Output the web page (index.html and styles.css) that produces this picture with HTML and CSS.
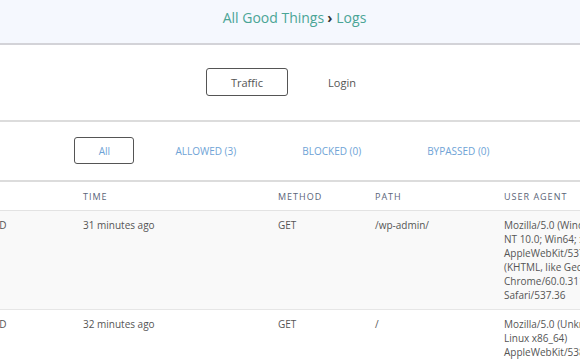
FILE: index.html
```html
<!DOCTYPE html>
<html>
<head>
<meta charset="utf-8">
<link rel="stylesheet" href="styles.css">
</head>
<body>
<header class="topbar">
  <span class="crumb">All Good Things</span><span class="sep">›</span><span class="crumb">Logs</span>
</header>
<nav class="tabs">
  <a class="tab active">Traffic</a>
  <a class="tab">Login</a>
</nav>
<nav class="filters">
  <a class="filter active">All</a>
  <a class="filter">ALLOWED (3)</a>
  <a class="filter">BLOCKED (0)</a>
  <a class="filter">BYPASSED (0)</a>
</nav>
<div class="table-wrap">
  <table class="logs">
    <colgroup>
      <col class="c-status"><col class="c-time"><col class="c-method"><col class="c-path"><col class="c-ua">
    </colgroup>
    <thead>
      <tr><th></th><th>Time</th><th>Method</th><th>Path</th><th>User Agent</th></tr>
    </thead>
    <tbody>
      <tr class="odd"><td>ALLOWED</td><td>31 minutes ago</td><td>GET</td><td>/wp-admin/</td><td>Mozilla/5.0 (Windows NT 10.0; Win64; x64) AppleWebKit/537.36 (KHTML, like Gecko) Chrome/60.0.3112.113 Safari/537.36</td></tr>
      <tr><td>ALLOWED</td><td>32 minutes ago</td><td>GET</td><td>/</td><td>Mozilla/5.0 (Unknown; Linux x86_64) AppleWebKit/538.1 (KHTML, like Gecko) PhantomJS/2.1.1 Safari/538.1</td></tr>
    </tbody>
  </table>
</div>
</body>
</html>
```
FILE: styles.css
```css
html, body {
  margin: 0;
  padding: 0;
  background: #fff;
  font-family: "Open Sans", "Noto Sans", sans-serif;
  overflow: hidden;
}
.topbar {
  height: 35px;
  padding: 8px 0 0 9px;
  background: #f5f8fe;
  border-bottom: 2px solid #d3d3d8;
  text-align: center;
  font-size: 14px;
  line-height: 19px;
  color: #4aa596;
}
.sep {
  color: #333;
  font-weight: 700;
  margin: 0 4px 0 3px;
}
.tabs {
  display: flex;
  justify-content: center;
  gap: 13px;
  padding: 23px 0 24px 9px;
  border-bottom: 2px solid #dcdcdc;
}
.tab {
  box-sizing: border-box;
  width: 82px;
  height: 28px;
  display: flex;
  align-items: center;
  justify-content: center;
  font-size: 11px;
  color: #555;
  border: 1px solid transparent;
  border-radius: 3px;
}
.tab.active {
  border-color: #555;
}
.filters {
  display: flex;
  justify-content: center;
  gap: 16px;
  padding: 15px 0 16px 9px;
  border-bottom: 2px solid #dcdcdc;
}
.filter {
  box-sizing: border-box;
  min-width: 60px;
  height: 27px;
  padding: 0 24px;
  display: flex;
  align-items: center;
  justify-content: center;
  font-size: 10px;
  color: #6ea3d6;
  border: 1px solid transparent;
  border-radius: 3px;
}
.filter.active {
  border-color: #555;
  padding: 0 10px;
}
.table-wrap {
  overflow: hidden;
}
.logs {
  margin-left: -50px;
  border-collapse: collapse;
  table-layout: fixed;
  width: 676px;
  font-size: 10px;
  line-height: 14px;
  color: #555;
}
.c-status { width: 123px; }
.c-time { width: 195px; }
.c-method { width: 97px; }
.c-path { width: 129px; }
.c-ua { width: 132px; }
.logs th {
  text-align: left;
  font-weight: 400;
  font-size: 9px;
  letter-spacing: 1px;
  text-transform: uppercase;
  color: #5a6478;
  height: 27px;
  padding: 1px 10px 0;
  border-bottom: 1px solid #e3e3e3;
}
.logs td {
  vertical-align: top;
  padding: 7px 10px;
  border-bottom: 1px solid #e6e6e6;
  overflow-wrap: break-word;
}
.logs tr.odd td {
  background: #f9f9f9;
}
```
